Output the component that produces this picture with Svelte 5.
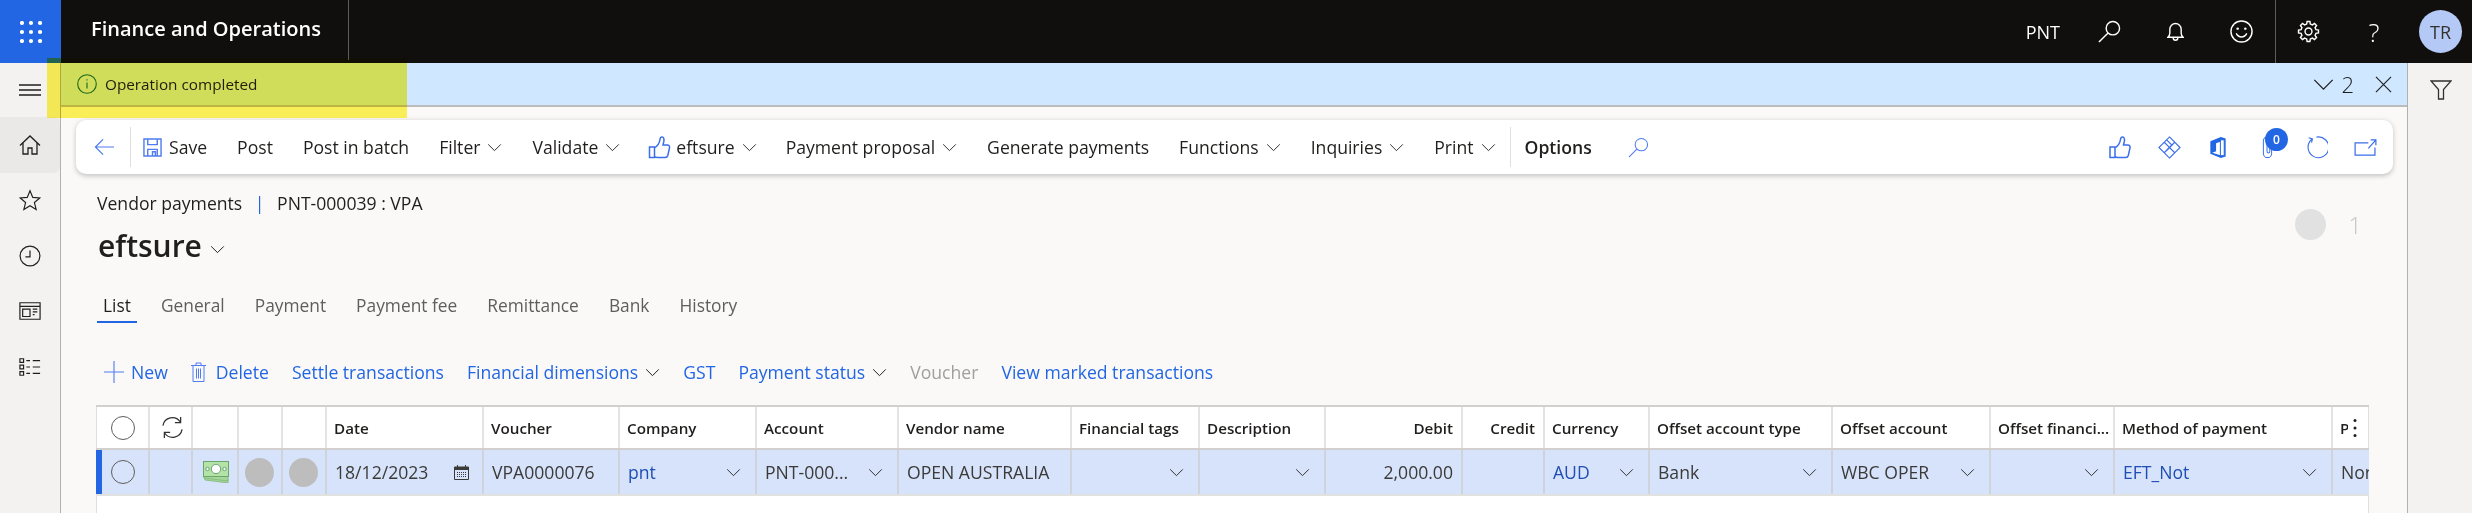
<script>
  const mainCmds = [
    { t: 'Post' }, { t: 'Post in batch' }, { t: 'Filter', c: 1 }, { t: 'Validate', c: 1 }
  ];
  const mainCmds2 = [
    { t: 'Payment proposal', c: 1 }, { t: 'Generate payments' }, { t: 'Functions', c: 1 },
    { t: 'Inquiries', c: 1 }, { t: 'Print', c: 1 }
  ];
  const tabs = ['List', 'General', 'Payment', 'Payment fee', 'Remittance', 'Bank', 'History'];
  const cols = [
    { w: 54, k: 'radio' }, { w: 43, k: 'sync' }, { w: 46, k: 'money' }, { w: 44, k: 'dot' }, { w: 44, k: 'dot' },
    { w: 157, h: 'Date', v: '18/12/2023', k: 'date' },
    { w: 136, h: 'Voucher', v: 'VPA0000076' },
    { w: 137, h: 'Company', v: 'pnt', link: 1, chev: 1 },
    { w: 142, h: 'Account', v: 'PNT-000...', chev: 1 },
    { w: 173, h: 'Vendor name', v: 'OPEN AUSTRALIA' },
    { w: 128, h: 'Financial tags', v: '', chev: 1 },
    { w: 126, h: 'Description', v: '', chev: 1 },
    { w: 137, h: 'Debit', v: '2,000.00', right: 1 },
    { w: 82, h: 'Credit', v: '', right: 1 },
    { w: 105, h: 'Currency', v: 'AUD', link: 1, chev: 1 },
    { w: 183, h: 'Offset account type', v: 'Bank', chev: 1 },
    { w: 158, h: 'Offset account', v: 'WBC OPER', chev: 1 },
    { w: 124, h: 'Offset financi...', v: '', chev: 1 },
    { w: 218, h: 'Method of payment', v: 'EFT_Not', link: 1, chev: 1 },
    { w: 36, h: 'P', v: 'None', k: 'last' }
  ];
  const gridCols = cols.map((c) => c.w + 'px').join(' ');

  const gearPath = (() => {
    const teeth = 8, R = 10.5, r = 8, pts = [];
    for (let i = 0; i < teeth; i++) {
      const a = (i / teeth) * Math.PI * 2;
      const s = Math.PI / teeth;
      [[r, a - s * 0.62], [R, a - s * 0.36], [R, a + s * 0.36], [r, a + s * 0.62]].forEach(([m, t]) =>
        pts.push((12 + m * Math.cos(t)).toFixed(2) + ' ' + (12 + m * Math.sin(t)).toFixed(2))
      );
    }
    return 'M' + pts.join('L') + 'Z';
  })();
</script>

{#snippet chev(cls = 'chev')}
  <svg class={cls} viewBox="0 0 16 10" aria-hidden="true"><path d="M1 1.500 8 8.500 15 1.500" /></svg>
{/snippet}

{#snippet thumb(cls)}
  <svg class={cls} viewBox="0 0 22 23" aria-hidden="true"><path class="blue-line" d="M1 11h5v10.500H1zM6 12c3-2 5-5 5.500-8.500.2-1.700 1-2.700 2.300-2.500 1.700.3 1.900 2.400 1.500 4.500L14.500 9h4.300c1.700 0 2.600 1.300 2.200 2.900l-1.700 7.600c-.4 1.300-1.300 2-2.600 2H9c-1.300 0-2.300-.4-3-1" /></svg>
{/snippet}

<div class="app">
  <header class="topbar">
    <button class="waffle" aria-label="Apps">
      <svg viewBox="0 0 22 22" aria-hidden="true">
        {#each [2, 11, 20] as y}{#each [2, 11, 20] as x}<circle cx={x} cy={y} r="2.100" />{/each}{/each}
      </svg>
    </button>
    <div class="brand">Finance and Operations</div>
    <div class="top-right">
      <span class="company">PNT</span>
      <svg class="ti search" viewBox="0 0 24 24" aria-hidden="true"><circle cx="15.500" cy="8.500" r="7" /><path d="M10.500 13.500 1 23" /></svg>
      <svg class="ti bell" viewBox="0 0 18 21" aria-hidden="true"><path d="M1 16.500c1.300-1.200 2-2.500 2-4.500V8a6 6 0 0 1 12 0v4c0 2 .7 3.300 2 4.500zM6.500 16.800a2.500 3 0 0 0 5 0" /></svg>
      <svg class="ti smile" viewBox="0 0 24 24" aria-hidden="true"><circle cx="12" cy="12" r="11" /><path d="M6.500 14c1.300 2.500 3.200 3.700 5.500 3.700s4.200-1.200 5.500-3.700" /><circle class="fill" cx="8" cy="9" r="1.300" /><circle class="fill" cx="16" cy="9" r="1.300" /></svg>
      <span class="top-sep"></span>
      <svg class="ti gear" viewBox="0 0 24 24" aria-hidden="true"><path d={gearPath} /><circle cx="12" cy="12" r="3.600" /></svg>
      <span class="help">?</span>
      <span class="avatar">TR</span>
    </div>
  </header>

  <div class="body">
    <nav class="rail">
      <button class="rail-btn burger" aria-label="Menu">
        <svg viewBox="0 0 22 12" aria-hidden="true"><path d="M0 1h22M0 6h22M0 11h22" /></svg>
      </button>
      <button class="rail-btn active" aria-label="Home">
        <svg viewBox="0 0 22 20" aria-hidden="true"><path d="M1 10.500 11 1l10 9.500M4 8v11h5v-6h4v6h5V8" /></svg>
      </button>
      <button class="rail-btn" aria-label="Favorites">
        <svg viewBox="0 0 24 24" aria-hidden="true"><path d="m12 2 3 7.200 7.700.6-5.900 5 1.900 7.500L12 18.300l-6.700 4 1.900-7.500-5.900-5L9 9.200z" /></svg>
      </button>
      <button class="rail-btn" aria-label="Recent">
        <svg viewBox="0 0 24 24" aria-hidden="true"><circle cx="12" cy="12" r="10.800" /><path d="M12 6v7H7" /></svg>
      </button>
      <button class="rail-btn" aria-label="Workspaces">
        <svg viewBox="0 0 24 20" aria-hidden="true"><path d="M1 1h22v18H1zM1 5h22M4 8h8v8H4zM15 8h5M15 11h5M15 14h2" /></svg>
      </button>
      <button class="rail-btn" aria-label="Modules">
        <svg viewBox="0 0 24 20" aria-hidden="true"><path d="M1 1h4v4H1zM1 8h4v4H1zM1 15h4v4H1zM8 3h4M15 3h8M8 10h4M15 10h8M8 17h4M15 17h8" /></svg>
      </button>
    </nav>

    <main class="main">
      <div class="message">
        <svg class="info" viewBox="0 0 20 20" aria-hidden="true"><circle cx="10" cy="10" r="9.300" /><path d="M10 8.500v6M10 5.200v1.300" /></svg>
        <span class="msg-text">Operation completed</span>
        <div class="msg-right">
          <svg class="msg-chev" viewBox="0 0 22 12" aria-hidden="true"><path d="M1 1l10 10L21 1" /></svg>
          <span class="msg-count">2</span>
          <svg class="msg-x" viewBox="0 0 18 18" aria-hidden="true"><path d="M1 1l16 16M17 1 1 17" /></svg>
        </div>
      </div>

      <div class="actionbar">
        <svg class="back" viewBox="0 0 22 18" aria-hidden="true"><path d="M21 9H1.500M9.500 1 1.500 9l8 8" /></svg>
        <span class="ab-sep first"></span>
        <span class="cmd save">
          <svg class="save-ic" viewBox="0 0 20 20" aria-hidden="true"><path d="M1 1h18v18H1zM5 1v6h10V1M5 19v-7h10v7M10 14.500h3V19h-3z" /></svg>
          <span>Save</span>
        </span>
        {#each mainCmds as c}
          <span class="cmd">{c.t}{#if c.c}{@render chev()}{/if}</span>
        {/each}
        <span class="cmd thumbcmd">{@render thumb('thumb-sm')}<span>eftsure</span>{@render chev()}</span>
        {#each mainCmds2 as c}
          <span class="cmd">{c.t}{#if c.c}{@render chev()}{/if}</span>
        {/each}
        <span class="ab-sep second"></span>
        <span class="options">Options</span>
        <svg class="ab-search" viewBox="0 0 22 22" aria-hidden="true"><circle cx="14" cy="8" r="6.500" /><path d="M9.500 12.500 1 21" /></svg>

        <div class="ab-icons">
          {@render thumb('ai thumb-lg')}
          <svg class="ai diamond" viewBox="0 0 24 24" aria-hidden="true"><path d="M12 1 23 12 12 23 1 12zM6.500 6.500 12 12l5.500-5.500M12 12l-5.500 5.500M12 12l5.500 5.500-5.500 5.500" /><path d="M9 4 14.500 9.500 9 15" /></svg>
          <svg class="ai office" viewBox="0 0 18 24" aria-hidden="true"><path class="solid" d="M1 5.500 12 1l5 1.500v19L12 23 1 18.500zM3 6.500v11l4-1.500V7.500l4.500-1.500v14.200l-8.500-2.700" /><path class="door" d="M11.500 4h4v16.500h-4z" /></svg>
          <span class="clip">
            <svg class="ai clip-ic" viewBox="0 0 12 24" aria-hidden="true"><path d="M10.500 7v12a4.500 4.500 0 0 1-9 0V5a3.500 3.500 0 0 1 7 0v12a1.500 1.500 0 0 1-3 0V7" /></svg>
            <span class="badge">0</span>
          </span>
          <svg class="ai refresh" viewBox="0 0 24 24" aria-hidden="true"><path d="M7.500 3.200A10.800 10.800 0 1 0 12 1.200M3.800 1.800l4 1.200-1 4" /></svg>
          <svg class="ai openin" viewBox="0 0 24 18" aria-hidden="true"><path d="M15 4H1v13h21V9M15 10l8-9M17.500 1H23v5.500" /></svg>
        </div>
      </div>

      <div class="content">
        <div class="head-row">
          <div class="head-left">
            <div class="crumb">Vendor payments <span class="pipe">|</span> PNT-000039 : VPA</div>
            <h1 class="title">eftsure {@render chev('title-chev')}</h1>
          </div>
          <div class="pager"><span class="pager-dot"></span><span class="pager-n">1</span></div>
        </div>

        <div class="tabs">
          {#each tabs as t, i}
            <span class="tab" class:on={i === 0}>{t}</span>
          {/each}
        </div>

        <div class="commands">
          <span class="lnk new">
            <svg class="plus" viewBox="0 0 20 22" aria-hidden="true"><path d="M10 0v22M0 11h20" /></svg>New
          </span>
          <span class="lnk del">
            <svg class="trash" viewBox="0 0 15 20" aria-hidden="true"><path d="M0 3.500h15M5 3.500V1h5v2.500M2 3.500v16h11v-16M5.500 6.500v10M7.500 6.500v10M9.500 6.500v10" /></svg>Delete
          </span>
          <span class="lnk">Settle transactions</span>
          <span class="lnk">Financial dimensions{@render chev('chev dark')}</span>
          <span class="lnk">GST</span>
          <span class="lnk">Payment status{@render chev('chev dark')}</span>
          <span class="lnk off">Voucher</span>
          <span class="lnk">View marked transactions</span>
        </div>

        <div class="grid">
          <div class="gr head" style:grid-template-columns={gridCols}>
            {#each cols as c}
              <div class="cell hcell" class:right={c.right}>
                {#if c.k === 'radio'}
                  <span class="radio big"></span>
                {:else if c.k === 'sync'}
                  <svg class="sync" viewBox="0 0 24 24" aria-hidden="true"><path d="M2 10a10 10 0 0 1 18-4M22 14A10 10 0 0 1 4 18M20.500 1v6h-6M3.500 23v-6h6" /></svg>
                {:else if c.k === 'last'}
                  <span class="clip-h">{c.h}</span>
                  <svg class="more" viewBox="0 0 4 20" aria-hidden="true"><circle cx="2" cy="2.500" r="1.500" /><circle cx="2" cy="10" r="1.500" /><circle cx="2" cy="17.500" r="1.500" /></svg>
                {:else if c.h}
                  {c.h}
                {/if}
              </div>
            {/each}
          </div>
          <div class="gr row" style:grid-template-columns={gridCols}>
            {#each cols as c, i}
              <div class="cell rcell" class:right={c.right} class:link={c.link} class:mark={i === 0}>
                {#if c.k === 'radio'}
                  <span class="radio"></span>
                {:else if c.k === 'money'}
                  <svg class="money" viewBox="0 0 26 22" aria-hidden="true">
                    <path class="m2" d="M1 15l24 3v4L2 19z" />
                    <path class="m2" d="M1 13h24v7L1 17z" />
                    <rect class="m1" x=".5" y=".5" width="25" height="15" />
                    <circle class="m3" cx="13" cy="8" r="4.700" />
                    <circle class="m3" cx="4.500" cy="8" r="1.700" />
                    <circle class="m3" cx="21.500" cy="8" r="1.700" />
                  </svg>
                {:else if c.k === 'dot'}
                  <span class="gdot"></span>
                {:else if c.k === 'date'}
                  <span class="val">{c.v}</span>
                  <svg class="cal" viewBox="0 0 15 15" aria-hidden="true"><path d="M.5 2h14v12.500H.5zM3.500 0v2M11.500 0v2" /><path class="cal-fill" d="M.5 2h14v3H.5z" /><path class="cal-dots" d="M3 7.500h9M3 9.500h9M3 11.500h9" /></svg>
                {:else if c.k === 'last'}
                  <span class="clip-v">{c.v}</span>
                {:else}
                  <span class="val">{c.v}</span>
                  {#if c.chev}{@render chev('cell-chev')}{/if}
                {/if}
              </div>
            {/each}
          </div>
        </div>
      </div>
    </main>

    <aside class="rightrail">
      <svg class="funnel" viewBox="0 0 22 20" aria-hidden="true"><path d="M1 1h20l-7.500 8.500V19h-5V9.500z" /></svg>
    </aside>
  </div>

  <div class="highlight"></div>
</div>

<style>
  :global(body) { margin: 0; background: #fff; }
  .app {
    position: relative; width: 2472px; height: 513px; overflow: hidden;
    display: flex; flex-direction: column;
    font-family: "Open Sans", "Noto Sans", sans-serif; font-size: 17.600px; color: #201f1e;
  }
  svg { display: block; flex: none; fill: none; stroke: currentColor; }
  button { border: 0; background: none; padding: 0; color: inherit; }

  /* top bar */
  .topbar { height: 63px; flex: none; display: flex; align-items: stretch; background: #110f0e; color: #fff; }
  .waffle { width: 61px; display: flex; align-items: center; justify-content: center; background: #2266e3; }
  .waffle svg { width: 22px; height: 22px; fill: #fff; stroke: none; }
  .brand { width: 258px; margin-left: 30px; margin-bottom: 3px; border-right: 1px solid #605e5c; font-size: 20px; font-weight: 600; line-height: 58px; height: 60px; box-sizing: border-box; }
  .top-right { margin-left: auto; display: flex; align-items: center; position: relative; }
  .company { font-size: 18px; margin-right: 38px; }
  .ti { stroke-width: 1.500; }
  .search { width: 23px; height: 23px; margin-right: 46px; }
  .bell { width: 17px; height: 21px; margin-right: 46px; }
  .smile { width: 23px; height: 23px; margin-right: 22px; }
  .fill { fill: #fff; stroke: none; }
  .top-sep { width: 1px; height: 63px; background: #605e5c; margin-right: 21px; }
  .gear { width: 23px; height: 23px; margin-right: 46px; }
  .help { font-size: 26px; font-weight: 300; width: 16px; text-align: center; line-height: 30px; margin-right: 37px; }
  .avatar { width: 43px; height: 43px; border-radius: 50%; background: #b4c9f5; color: #323130; display: flex; align-items: center; justify-content: center; font-size: 18px; margin-right: 10px; }

  .body { flex: 1; min-height: 0; display: flex; }

  /* left rail */
  .rail { width: 61px; flex: none; box-sizing: border-box; background: #f3f2f1; border-right: 1px solid #b3b0ad; display: flex; flex-direction: column; }
  .rail-btn { height: 55.500px; display: flex; align-items: center; justify-content: center; width: 60px; flex: none; color: #201f1e; }
  .rail-btn svg { width: 22px; height: 22px; stroke-width: 1.300; }
  .burger { height: 54px; }
  .burger svg { height: 12px; }
  .active { background: #ebe9e8; border-radius: 0 6px 6px 0; }

  .main { flex: 1; min-width: 0; display: flex; flex-direction: column; background: #faf9f8; }

  /* message bar */
  .message { height: 44px; flex: none; box-sizing: border-box; display: flex; align-items: center; padding-left: 16px; background: #cfe7ff; border-bottom: 2px solid #bcbcbc; }
  .info { width: 20px; height: 20px; color: #1b6b3a; stroke-width: 1.100; }
  .msg-text { margin-left: 8px; font-size: 15.300px; }
  .msg-right { margin-left: auto; display: flex; align-items: center; }
  .msg-chev { width: 21px; height: 11px; stroke-width: 1.400; }
  .msg-count { font-size: 22px; margin-left: 7px; font-weight: 300; line-height: 24px; }
  .msg-x { width: 17px; height: 17px; margin-left: 21px; margin-right: 15px; stroke-width: 1.200; }

  /* action bar */
  .actionbar { flex: none; height: 54px; margin: 13px 14px 0 15px; background: #fff; border-radius: 10px; box-shadow: 0 1.500px 5px rgba(0, 0, 0, .22); display: flex; align-items: center; padding-left: 18px; }
  .back { width: 21px; height: 18px; color: #4f7cf0; stroke-width: 1.300; }
  .ab-sep { width: 1px; height: 40px; background: #e1dfdd; }
  .ab-sep.first { margin: 0 12px 0 15px; }
  .ab-sep.second { margin: 0 14px 0 -16px; }
  .cmd { display: flex; align-items: center; margin-right: 30px; white-space: nowrap; color: #201f1e; }
  .save-ic { width: 19px; height: 19px; color: #4f7cf0; stroke-width: 1.500; margin-right: 7px; }
  .chev { width: 15px; height: 9px; margin-left: 7px; stroke-width: 1.100; color: #323130; }
  .thumbcmd { margin-right: 29px; margin-left: -2px; }
  :global(.thumb-sm) { width: 23px; height: 23px; margin-right: 5px; }
  .blue-line { stroke: #3b6eea; stroke-width: 1.500; }
  .options { font-weight: 600; }
  .ab-search { width: 21px; height: 21px; color: #4f7cf0; stroke-width: 1.100; margin-left: 36px; }
  .ab-icons { margin-left: auto; margin-right: 16px; display: flex; align-items: center; color: #3b6eea; }
  .ai { stroke-width: 1.400; }
  :global(.thumb-lg) { width: 22px; height: 23px; margin-right: 27px; }
  .diamond { width: 23px; height: 23px; margin-right: 28px; stroke-width: 1.200; }
  .office { width: 18px; height: 23px; margin-right: 35px; }
  .solid { fill: #2266e3; stroke: none; fill-rule: evenodd; }
  .door { fill: #fff; stroke: #2266e3; stroke-width: 1; }
  .clip { position: relative; display: block; margin-right: 32px; }
  .clip-ic { width: 11px; height: 22px; margin-right: 0; stroke-width: 1.100; }
  .badge { position: absolute; left: 3px; top: -8px; width: 23px; height: 23px; border-radius: 50%; background: #2266e3; color: #fff; font-size: 12px; font-weight: 600; display: flex; align-items: center; justify-content: center; }
  .refresh { width: 23px; height: 23px; margin-right: 26px; stroke-width: 1.200; }
  .openin { width: 23px; height: 17px; stroke-width: 1.300; }

  /* content */
  .content { flex: 1; min-height: 0; display: flex; flex-direction: column; padding-left: 35px; padding-right: 38px; }
  .head-row { display: flex; justify-content: space-between; align-items: flex-start; height: 92px; margin-top: 18px; flex: none; padding-left: 1px; }
  .crumb { line-height: 22px; height: 22px; white-space: nowrap; }
  .pipe { color: #2266e3; margin: 0 8px; }
  .title { margin: 12px 0 0 1px; font-size: 30px; font-weight: 600; line-height: 40px; height: 40px; display: flex; align-items: center; white-space: pre; }
  :global(.title-chev) { width: 15px; height: 9px; stroke-width: 1.100; margin-top: 7px; }
  .pager { display: flex; align-items: center; margin-top: 17px; margin-right: 7px; }
  .pager-dot { width: 31px; height: 31px; border-radius: 50%; background: #e1e1e1; }
  .pager-n { font-size: 24px; font-weight: 300; color: #c8c6c4; margin-left: 22px; line-height: 31px; }

  .tabs { flex: none; display: flex; margin-top: 10px; padding-left: 1px; gap: 30px; height: 29px; font-size: 17.350px; }
  .tab { color: #605e5c; line-height: 22px; position: relative; }
  .tab.on { color: #201f1e; padding: 0 6px; margin-right: -6px; border-bottom: 2px solid #2266e3; height: 27px; }

  .commands { flex: none; display: flex; align-items: center; margin-top: 38px; height: 22px; padding-left: 8px; color: #2266e3; }
  .lnk { display: flex; align-items: center; margin-right: 23px; white-space: nowrap; color: #2266e3; }
  .lnk.off { color: #a19f9d; }
  .plus { width: 20px; height: 22px; stroke-width: 1.100; margin-right: 7px; color: #4f7cf0; }
  .trash { width: 15px; height: 20px; stroke-width: 1; margin-right: 10px; color: #4f7cf0; }
  :global(.chev.dark) { color: #201f1e; }

  /* grid */
  .grid { flex: 1; min-height: 0; margin-top: 22px; background: #fff; border-top: 2px solid #d2d0ce; box-shadow: inset 1px 0 #e1dfdd, inset -1px 0 #e1dfdd; width: 2273px; }
  .gr { display: grid; }
  .head { height: 41px; border-bottom: 2px solid #d2d0ce; }
  .row { height: 46px; box-sizing: border-box; background: #d6e3fa; border-bottom: 2px solid #e1e1e1; }
  .cell { box-sizing: border-box; display: flex; align-items: center; border-right: 2px solid #e3e3e3; min-width: 0; white-space: nowrap; position: relative; }
  .hcell { padding: 0 7px; font-size: 15.200px; font-weight: 600; color: #201f1e; }
  .rcell { padding: 0 7px 0 8px; border-right-color: #cfd3dc; color: #3b3a39; }
  .right { justify-content: flex-end; padding-right: 8px; }
  .link .val { color: #1f4eb4; }
  .mark { box-shadow: inset 6px 0 #2266e3; }
  .radio { width: 24px; height: 24px; box-sizing: border-box; border-radius: 50%; border: 1px solid #605e5c; margin-left: 15px; background: transparent; }
  .hcell:first-child, .rcell:first-child { padding: 0; }
  .sync { width: 23px; height: 23px; margin: 0 0 0 4px; stroke-width: 1.300; color: #323130; }
  .hcell:nth-child(2) { padding: 0 0 0 7px; }
  .money { width: 26px; height: 22px; margin-left: 2px; }
  .m1 { fill: #b4e3a8; stroke: #6aa86a; stroke-width: 1; }
  .m2 { fill: #a5d69a; stroke: #7db87a; stroke-width: .800; }
  .m3 { fill: #fff; stroke: #4f8f55; stroke-width: .800; }
  .gdot { width: 29px; height: 29px; border-radius: 50%; background: #bdbdbd; margin-left: -1px; }
  .rcell:nth-child(4), .rcell:nth-child(5) { padding-left: 7px; }
  .cal { width: 15px; height: 15px; margin-left: auto; margin-right: 6px; stroke-width: 1; color: #3b3a39; }
  .cal-fill { fill: #3b3a39; stroke: none; }
  .cal-dots { stroke-dasharray: 1 1; }
  :global(.cell-chev) { width: 15px; height: 9px; stroke-width: 1.100; margin-left: auto; margin-right: 7px; color: #323130; }
  .clip-h { width: 8px; overflow: hidden; }
  .more { width: 4px; height: 20px; margin-left: 5px; fill: #201f1e; stroke: none; }
  .clip-v { overflow: hidden; }
  .hcell:last-child, .rcell:last-child { border-right: 0; overflow: hidden; }
  .rcell:last-child { padding-right: 0; }

  /* right rail */
  .rightrail { width: 65px; flex: none; box-sizing: border-box; background: #f3f2f1; border-left: 1px solid #b3b0ad; padding: 17px 0 0 22px; }
  .funnel { width: 22px; height: 20px; stroke-width: 1.300; color: #323130; }

  /* yellow marker over the message */
  .highlight { position: absolute; left: 47px; top: 58px; width: 360px; height: 60px; background: #fff45a; mix-blend-mode: multiply; pointer-events: none; }
</style>
